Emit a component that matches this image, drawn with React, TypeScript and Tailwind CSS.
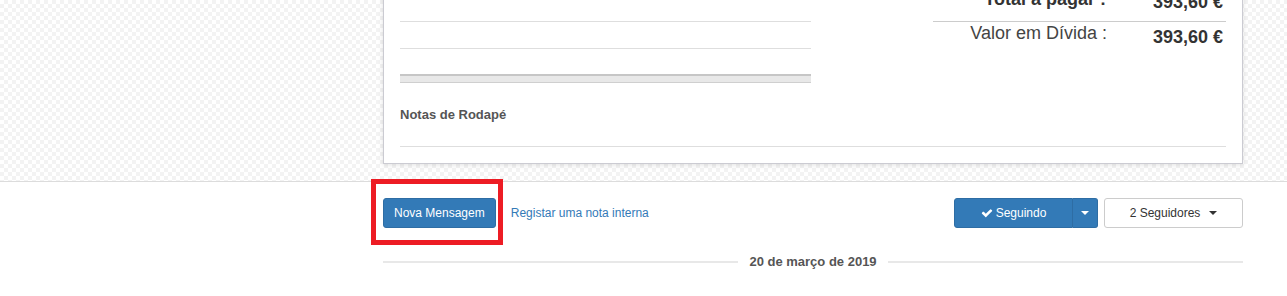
import React from 'react';

function Caret({ className }: { className: string }) {
  return <span className={`inline-block w-0 h-0 border-x-[4px] border-x-transparent border-t-[4px] ${className}`} />;
}

function CheckIcon() {
  return (
    <svg viewBox="0 0 1792 1792" className="w-[12px] h-[12px] fill-white">
      <path d="M1671 566q0 40-28 68l-724 724-136 136q-28 28-68 28t-68-28l-136-136-362-362q-28-28-28-68t28-68l136-136q28-28 68-28t68 28l294 295 656-657q28-28 68-28t68 28l136 136q28 28 28 68z" />
    </svg>
  );
}

export default function App() {
  return (
    <div className="w-[1287px] h-[296px] bg-white font-['Liberation_Sans',Arial,sans-serif] text-[#333] overflow-hidden">
      {/* invoice area on checkered backdrop */}
      <div className="h-[182px] overflow-hidden border-b border-[#dcdcdc] bg-[conic-gradient(#f3f3f3_25%,#fff_0_50%,#f3f3f3_0_75%,#fff_0)] bg-size-[8px_8px]">
        <div className="ml-[383px] -mt-[40px] w-[860px] bg-white border border-[#cbcbd2] shadow-[0_1px_5px_rgba(0,0,0,0.12)] px-4 pb-4">
          <div className="flex justify-between">
            <div className="w-[411px]">
              <div className="h-[61px] border-b border-[#dedede]" />
              <div className="h-[27px] border-b border-[#dedede]" />
              <div className="h-[25px]" />
              <div className="h-[9px] bg-[#e8e8e8] border-t-2 border-t-[#c6c6c6] border-b border-b-[#cfcfcf]" />
            </div>
            <div className="w-[293px]">
              <div className="h-[61px] border-b border-[#cccccc] grid grid-cols-[1fr_116px] items-end text-[18px] leading-[22px] font-bold">
                <div className="text-right pr-[4px] pb-[11px]">Total a pagar :</div>
                <div className="text-right pr-[3px] pb-[8px]">393,60 €</div>
              </div>
              <div className="grid grid-cols-[1fr_116px] items-start text-[18px] leading-[22px]">
                <div className="text-right pr-[3px] text-[#444]">Valor em Dívida :</div>
                <div className="text-right pr-[3px] pt-[4px] font-bold">393,60 €</div>
              </div>
            </div>
          </div>
          <div className="pt-[23px] border-b border-[#dedede] h-[64px]">
            <div className="text-[13px] leading-[18px] font-bold text-[#555]">Notas de Rodapé</div>
          </div>
        </div>
      </div>

      {/* actions */}
      <div className="ml-[383px] w-[860px] pt-[16px]">
        <div className="flex items-center justify-between">
          <div className="flex items-center gap-[15px]">
            <div className="relative">
              <button className="h-[30px] px-[10px] text-[12px] leading-[18px] text-white bg-[#337ab7] border border-[#2e6da4] rounded-[3px]">
                Nova Mensagem
              </button>
              <div className="absolute left-[-12px] top-[-19px] w-[132px] h-[66px] border-[5px] border-[#ed1c24] pointer-events-none" />
            </div>
            <a className="text-[12px] leading-[18px] text-[#337ab7]">Registar uma nota interna</a>
          </div>
          <div className="flex items-center gap-[6px]">
            <div className="flex h-[30px]">
              <button className="w-[119px] h-full flex items-center justify-center gap-[3px] text-[12px] text-white bg-[#337ab7] border border-[#2e6da4] rounded-l-[3px]">
                <CheckIcon />
                Seguindo
              </button>
              <button className="w-[25px] h-full flex items-center justify-center bg-[#337ab7] border border-l-0 border-[#2e6da4] rounded-r-[3px]">
                <Caret className="border-t-white" />
              </button>
            </div>
            <button className="w-[139px] h-[30px] flex items-center justify-center gap-[9px] text-[12px] text-[#333] bg-white border border-[#ccc] rounded-[3px]">
              2 Seguidores
              <Caret className="border-t-[#333]" />
            </button>
          </div>
        </div>

        <div className="mt-[24px] h-[20px] flex items-center">
          <div className="flex-1 h-[2px] bg-[#e8e8e8]" />
          <div className="px-[11px] text-[13px] leading-[20px] font-bold text-[#555]">20 de março de 2019</div>
          <div className="flex-1 h-[2px] bg-[#e8e8e8]" />
        </div>
      </div>
    </div>
  );
}
